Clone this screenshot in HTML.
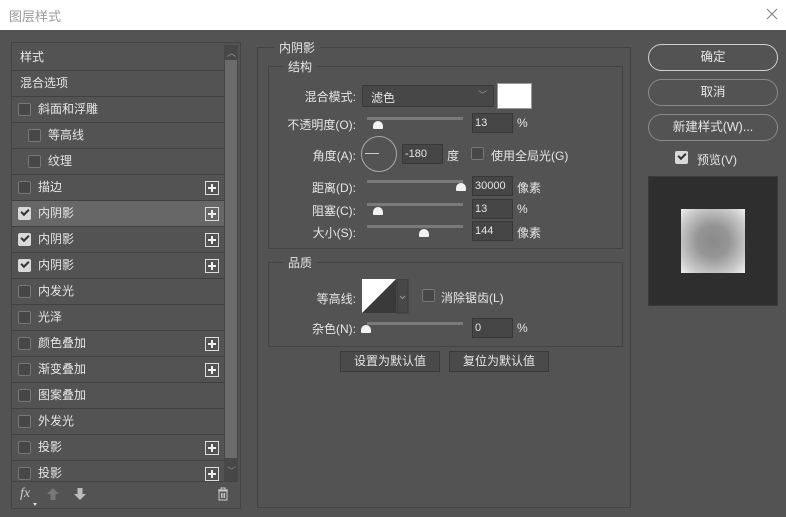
<!DOCTYPE html>
<html><head><meta charset="utf-8"><style>
*{margin:0;padding:0;box-sizing:border-box}
body{width:786px;height:517px;background:#535353;position:relative;overflow:hidden;font-family:"Liberation Sans","Noto Sans CJK SC",sans-serif;font-size:12px;color:#e6e6e6}
.a{position:absolute}
.title{left:0;top:0;width:786px;height:30px;background:#fff;color:#9a9a9a;font-size:13px;padding:6px 0 0 9px}
.row{position:absolute;left:12px;width:212px;height:26px;border-bottom:1px solid #404040;line-height:25px}
.cb{position:absolute;width:13px;height:13px;border:1px solid #777;border-radius:2px;background:#474747}
.cbk{position:absolute;width:13px;height:13px;border-radius:2px;background:#d9d9d9}
.cbk:after{content:"";position:absolute;left:3px;top:2px;width:6px;height:3px;border-left:2px solid #333;border-bottom:2px solid #333;transform:rotate(-45deg)}
.plus{position:absolute;left:193px;top:6px;width:14px;height:14px;border:1px solid #ddd}
.plus:before{content:"";position:absolute;left:2px;top:5px;width:8px;height:2px;background:#eee}
.plus:after{content:"";position:absolute;left:5px;top:2px;width:2px;height:8px;background:#eee}
.box{position:absolute;border:1px solid #6e6e6e}
.leg{position:absolute;background:#535353;padding:0 5px;font-size:12px}
.lbl{position:absolute;text-align:right;width:100px}
.inp{position:absolute;background:#454545;border:1px solid #383838;height:20px;line-height:18px;padding-left:2px;font-size:11px}
.track{position:absolute;height:3px;background:#7a7a7a;width:96px}
.thumb{position:absolute;width:10px;height:8px;background:#f2f2f2;border-radius:5px 5px 1px 1px}
.btn{position:absolute;background:#4a4a4a;border:1px solid #3a3a3a;height:21px;line-height:19px;text-align:center;font-size:12px}
.pill{position:absolute;left:648px;width:130px;height:27px;border:1px solid #8a8a8a;border-radius:14px;text-align:center;line-height:25px;font-size:12.5px}
</style></head><body>
<div class="a title">图层样式</div>
<svg class="a" style="left:766px;top:8px" width="12" height="12"><path d="M1 1L11 11M11 1L1 11" stroke="#888" stroke-width="1.2"/></svg>

<div class="box" style="left:11px;top:42px;width:230px;height:467px;border-color:#444"></div>
<div class="a" style="left:224px;top:45px;width:14px;height:436px;background:#474747"></div>
<div class="a" style="left:225px;top:60px;width:12px;height:398px;background:#6b6b6b"></div>
<div class="a" style="left:227px;top:46px;color:#999;font-size:9px">︿</div>
<div class="a" style="left:227px;top:464px;color:#888;font-size:9px">﹀</div>

<div class="row" style="top:45px;padding-left:8px">样式</div>
<div class="row" style="top:71px;padding-left:8px">混合选项</div>
<div class="row" style="top:97px"><div class="cb" style="left:6px;top:6px"></div><span style="position:absolute;left:26px">斜面和浮雕</span></div>
<div class="row" style="top:123px"><div class="cb" style="left:16px;top:6px"></div><span style="position:absolute;left:36px">等高线</span></div>
<div class="row" style="top:149px"><div class="cb" style="left:16px;top:6px"></div><span style="position:absolute;left:36px">纹理</span></div>
<div class="row" style="top:175px"><div class="cb" style="left:6px;top:6px"></div><span style="position:absolute;left:26px">描边</span><div class="plus"></div></div>
<div class="row" style="top:201px;background:#676767"><div class="cbk" style="left:6px;top:6px"></div><span style="position:absolute;left:26px">内阴影</span><div class="plus"></div></div>
<div class="row" style="top:227px"><div class="cbk" style="left:6px;top:6px"></div><span style="position:absolute;left:26px">内阴影</span><div class="plus"></div></div>
<div class="row" style="top:253px"><div class="cbk" style="left:6px;top:6px"></div><span style="position:absolute;left:26px">内阴影</span><div class="plus"></div></div>
<div class="row" style="top:279px"><div class="cb" style="left:6px;top:6px"></div><span style="position:absolute;left:26px">内发光</span></div>
<div class="row" style="top:305px"><div class="cb" style="left:6px;top:6px"></div><span style="position:absolute;left:26px">光泽</span></div>
<div class="row" style="top:331px"><div class="cb" style="left:6px;top:6px"></div><span style="position:absolute;left:26px">颜色叠加</span><div class="plus"></div></div>
<div class="row" style="top:357px"><div class="cb" style="left:6px;top:6px"></div><span style="position:absolute;left:26px">渐变叠加</span><div class="plus"></div></div>
<div class="row" style="top:383px"><div class="cb" style="left:6px;top:6px"></div><span style="position:absolute;left:26px">图案叠加</span></div>
<div class="row" style="top:409px"><div class="cb" style="left:6px;top:6px"></div><span style="position:absolute;left:26px">外发光</span></div>
<div class="row" style="top:435px"><div class="cb" style="left:6px;top:6px"></div><span style="position:absolute;left:26px">投影</span><div class="plus"></div></div>
<div class="row" style="top:461px;height:20px;overflow:hidden;border:none"><div class="cb" style="left:6px;top:6px"></div><span style="position:absolute;left:26px">投影</span><div class="plus"></div></div>
<div class="a" style="left:12px;top:481px;width:226px;height:1px;background:#444"></div>
<div class="a" style="left:20px;top:486px;font-style:italic;font-family:'Liberation Serif',serif;font-size:14px;color:#ccc">fx</div>
<div class="a" style="left:33px;top:503px;width:0;height:0;border-left:2px solid transparent;border-right:2px solid transparent;border-top:3px solid #ddd"></div>
<svg class="a" style="left:46px;top:487px" width="14" height="14"><path d="M7 1L13 7H9.5V13H4.5V7H1Z" fill="#777"/></svg>
<svg class="a" style="left:73px;top:487px" width="14" height="14"><path d="M7 13L13 7H9.5V1H4.5V7H1Z" fill="#bbb"/></svg>
<svg class="a" style="left:217px;top:487px" width="12" height="14"><path d="M1 3H11M4 3V1H8V3M2 4H10V13H2Z M4.5 6V11M6 6V11M7.5 6V11" stroke="#ccc" fill="none" stroke-width="1"/></svg>

<div class="box" style="left:257px;top:47px;width:374px;height:461px;border-color:#444"></div>
<div class="leg" style="left:274px;top:39px">内阴影</div>
<div class="box" style="left:268px;top:66px;width:355px;height:183px;border-color:#444"></div>
<div class="leg" style="left:283px;top:58px">结构</div>

<div class="lbl" style="left:256px;top:88px">混合模式:</div>
<div class="a" style="left:362px;top:85px;width:132px;height:22px;background:#474747;border:1px solid #3a3a3a;padding:3px 0 0 8px">滤色<span style="position:absolute;right:6px;top:2px;color:#999;font-size:9px">﹀</span></div>
<div class="a" style="left:497px;top:83px;width:35px;height:26px;background:#fff;border:1px solid #999"></div>

<div class="lbl" style="left:256px;top:116px">不透明度(O):</div>
<div class="track" style="left:367px;top:117px"></div><div class="thumb" style="left:373px;top:121px"></div>
<div class="inp" style="left:472px;top:113px;width:41px">13</div><div class="a" style="left:517px;top:116px">%</div>

<div class="lbl" style="left:256px;top:147px">角度(A):</div>
<div class="a" style="left:361px;top:136px;width:36px;height:36px;border:1px solid #aaa;border-radius:50%"></div>
<div class="a" style="left:365px;top:153px;width:14px;height:1px;background:#ccc"></div>
<div class="inp" style="left:402px;top:144px;width:41px">-180</div><div class="a" style="left:447px;top:147px">度</div>
<div class="cb" style="left:471px;top:147px"></div><div class="a" style="left:491px;top:147px">使用全局光(G)</div>

<div class="lbl" style="left:256px;top:179px">距离(D):</div>
<div class="track" style="left:367px;top:180px"></div><div class="thumb" style="left:456px;top:183px"></div>
<div class="inp" style="left:472px;top:176px;width:41px">30000</div><div class="a" style="left:517px;top:179px">像素</div>

<div class="lbl" style="left:256px;top:202px">阻塞(C):</div>
<div class="track" style="left:367px;top:203px"></div><div class="thumb" style="left:373px;top:207px"></div>
<div class="inp" style="left:472px;top:199px;width:41px">13</div><div class="a" style="left:517px;top:202px">%</div>

<div class="lbl" style="left:256px;top:224px">大小(S):</div>
<div class="track" style="left:367px;top:225px"></div><div class="thumb" style="left:419px;top:229px"></div>
<div class="inp" style="left:472px;top:221px;width:41px">144</div><div class="a" style="left:517px;top:224px">像素</div>

<div class="box" style="left:268px;top:262px;width:355px;height:85px;border-color:#444"></div>
<div class="leg" style="left:283px;top:254px">品质</div>
<div class="lbl" style="left:256px;top:290px">等高线:</div>
<svg class="a" style="left:362px;top:279px" width="47" height="35"><rect x="0" y="0" width="34" height="34" fill="#fff"/><path d="M0 34L34 0V34Z" fill="#3a3a3a"/><rect x="35" y="0" width="11" height="34" fill="#474747" stroke="#3a3a3a"/><path d="M38 17L40.5 19.5L43 17" stroke="#999" fill="none"/></svg>
<div class="cb" style="left:422px;top:289px"></div><div class="a" style="left:441px;top:289px">消除锯齿(L)</div>
<div class="lbl" style="left:256px;top:320px">杂色(N):</div>
<div class="track" style="left:367px;top:322px"></div><div class="thumb" style="left:361px;top:325px"></div>
<div class="inp" style="left:472px;top:318px;width:41px">0</div><div class="a" style="left:517px;top:321px">%</div>

<div class="btn" style="left:340px;top:351px;width:100px">设置为默认值</div>
<div class="btn" style="left:449px;top:351px;width:100px">复位为默认值</div>

<div class="pill" style="top:44px;border-color:#d0d0d0">确定</div>
<div class="pill" style="top:79px">取消</div>
<div class="pill" style="top:114px">新建样式(W)...</div>
<div class="cbk" style="left:675px;top:151px"></div><div class="a" style="left:697px;top:151px">预览(V)</div>
<div class="a" style="left:648px;top:176px;width:130px;height:130px;background:#2e2e2e;border:1px solid #3a3a3a"></div>
<div class="a" style="left:681px;top:209px;width:64px;height:64px;background:radial-gradient(circle,#8a8a8a 0%,#959595 35%,#c8c8c8 75%,#f0f0f0 100%)"></div>
</body></html>
